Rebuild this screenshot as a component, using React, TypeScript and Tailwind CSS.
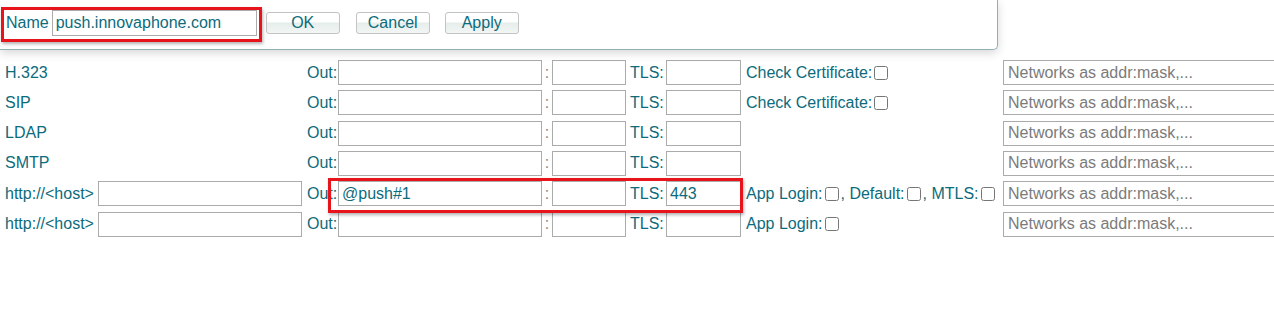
import type { ReactNode } from "react";

type Row = {
  label: string;
  host?: boolean;
  out?: string;
  tls?: string;
  extra?: ReactNode;
};

const inputCls =
  "h-[25px] shrink-0 border border-[#ababab] bg-white px-[3px] text-[16px] text-[#0c6b7c] outline-none placeholder:text-[#7b7b7b]";

const Check = () => (
  <input type="checkbox" className="mx-[2px] h-[14px] w-[14px] shrink-0" />
);

const rows: Row[] = [
  { label: "H.323", extra: <><span>Check Certificate:</span><Check /></> },
  { label: "SIP", extra: <><span>Check Certificate:</span><Check /></> },
  { label: "LDAP" },
  { label: "SMTP" },
  {
    label: "http://<host>",
    host: true,
    out: "@push#1",
    tls: "443",
    extra: (
      <>
        <span>App Login:</span>
        <Check />
        <span>, Default:</span>
        <Check />
        <span>, MTLS:</span>
        <Check />
      </>
    ),
  },
  { label: "http://<host>", host: true, extra: <><span>App Login:</span><Check /></> },
];

function Btn({ children, className = "" }: { children: ReactNode; className?: string }) {
  return (
    <button
      type="button"
      className={
        "h-[22px] w-[74px] shrink-0 rounded-[3px] border border-[#c3c3c3] bg-[linear-gradient(#ffffff_0%,#ffffff_42%,#e6eeec_52%,#f2f6f5_100%)] text-center text-[16px] leading-[20px] text-[#0c6b7c] " +
        className
      }
    >
      {children}
    </button>
  );
}

export default function App() {
  return (
    <div className="relative h-[314px] w-[1274px] overflow-hidden bg-white font-['Liberation_Sans',Arial,sans-serif] text-[16px] text-[#0c6b7c]">
      {/* dialog strip */}
      <div className="relative z-10 flex h-[50px] w-[998px] items-center rounded-br-[5px] border-b border-r border-[#92b0b4] bg-white pb-[4px] pl-[6px] shadow-[0_3px_10px_rgba(0,0,0,0.16)]">
        <span>Name</span>
        <input
          className="ml-[3px] h-[26px] w-[205px] shrink-0 border border-[#ababab] px-[3px] text-[16px] text-[#0c6b7c] outline-none"
          defaultValue="push.innovaphone.com"
        />
        <Btn className="ml-[9px]">OK</Btn>
        <Btn className="ml-[16px]">Cancel</Btn>
        <Btn className="ml-[15px]">Apply</Btn>
      </div>

      {/* table */}
      <div className="mt-[10px] flex flex-col gap-[5.33px]">
        {rows.map((r, i) => (
          <div key={i} className="flex h-[25px] items-center whitespace-nowrap">
            <div className="flex w-[302px] shrink-0 items-center pl-[5px]">
              <span>{r.label}</span>
              {r.host && <input className={inputCls + " ml-auto w-[204px]"} />}
            </div>
            <span className="w-[36px] shrink-0 pl-[5px]">Out:</span>
            <input className={inputCls + " w-[204px]"} defaultValue={r.out ?? ""} />
            <span className="w-[10px] shrink-0 text-center text-[#8a8a8a]">:</span>
            <input className={inputCls + " w-[74px]"} />
            <span className="w-[40px] shrink-0 pl-[4px]">TLS:</span>
            <input className={inputCls + " w-[75px]"} defaultValue={r.tls ?? ""} />
            <div className="flex w-[262px] shrink-0 items-center pl-[5px]">{r.extra}</div>
            <input className={inputCls + " w-[300px] pl-[4px]"} placeholder="Networks as addr:mask,..." />
          </div>
        ))}
      </div>

      {/* annotation boxes */}
      <div className="absolute left-[1px] top-[7px] z-20 h-[35px] w-[261px] border-[3px] border-[#e8141b] shadow-[1px_2px_3px_rgba(0,0,0,0.3)]" />
      <div className="absolute left-[328px] top-[178px] z-20 h-[35px] w-[415px] border-[3px] border-[#e8141b] shadow-[1px_2px_3px_rgba(0,0,0,0.3)]" />
    </div>
  );
}
